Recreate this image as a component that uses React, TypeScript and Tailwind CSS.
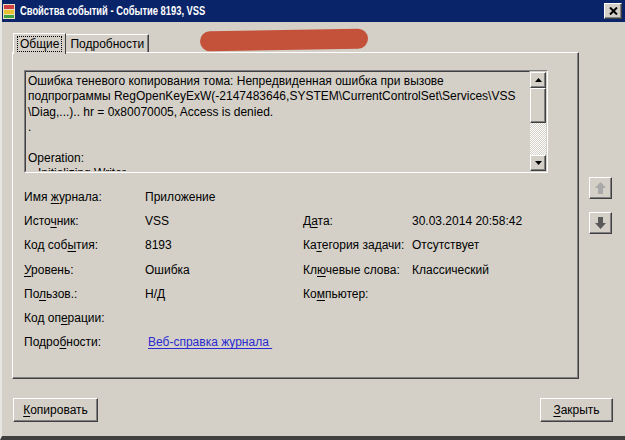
import React from "react";

const FONT = "font-['Liberation_Sans','Noto_Sans',sans-serif]";

const raised =
  "border border-t-white border-l-white border-r-[#404040] border-b-[#404040] shadow-[inset_-1px_-1px_0_#808080]";

function U({ children }: { children: React.ReactNode }) {
  return <span className="underline underline-offset-2">{children}</span>;
}

function ArrowBtn({ dir }: { dir: "up" | "down" }) {
  const up = dir === "up";
  return (
    <div className={`w-[23px] h-[22px] flex items-center justify-center bg-[#d4d0c8] ${raised}`}>
      <svg width="11" height="12" viewBox="0 0 11 12">
        {up ? (
          <polygon points="5.5,0 11,6 8,6 8,12 3,12 3,6 0,6" fill="#a9a9a9" />
        ) : (
          <polygon points="3,0 8,0 8,6 11,6 5.5,12 0,6 3,6" fill="#5a5a5a" />
        )}
      </svg>
    </div>
  );
}

function ScrollArrow({ up }: { up: boolean }) {
  return (
    <div className={`w-[16px] h-[16px] flex items-center justify-center bg-[#d4d0c8] ${raised}`}>
      <svg width="7" height="4" viewBox="0 0 7 4">
        {up ? <polygon points="3.5,0 7,4 0,4" fill="#000" /> : <polygon points="0,0 7,0 3.5,4" fill="#000" />}
      </svg>
    </div>
  );
}

const left = [
  { label: <>Имя <U>ж</U>урнала:</>, value: "Приложение" },
  { label: <>Исто<U>ч</U>ник:</>, value: "VSS" },
  { label: <>Код соб<U>ы</U>тия:</>, value: "8193" },
  { label: <><U>У</U>ровень:</>, value: "Ошибка" },
  { label: <>По<U>л</U>ьзов.:</>, value: "Н/Д" },
  { label: <>Код оп<U>е</U>рации:</>, value: "" },
];

const right = [
  null,
  { label: <>Д<U>а</U>та:</>, value: "30.03.2014 20:58:42" },
  { label: <>Ка<U>т</U>егория задачи:</>, value: "Отсутствует" },
  { label: <>Кл<U>ю</U>чевые слова:</>, value: "Классический" },
  { label: <>Ко<U>м</U>пьютер:</>, value: "" },
  null,
];

export default function App() {
  return (
    <div className={`relative w-[625px] h-[440px] bg-[#d4d0c8] overflow-hidden text-[12px] text-black ${FONT} border-l-2 border-l-[#e8e6e1] border-b-4 border-b-[#404040]`}>
      {/* Title bar */}
      <div className="h-[22px] bg-[#0a246a] flex items-center pl-[3px] pr-[3px] -ml-[2px]">
        <svg width="12" height="15" viewBox="0 0 12 15" className="shrink-0">
          <rect x="0" y="0" width="12" height="15" fill="#e8e0c0" />
          <rect x="1" y="1" width="10" height="4" fill="#d04040" />
          <rect x="1" y="6" width="10" height="4" fill="#e8c030" />
          <rect x="1" y="11" width="10" height="3" fill="#40a040" />
        </svg>
        <div className="ml-[5px] text-white font-bold text-[12px] whitespace-nowrap origin-left scale-x-[0.78]">
          Свойства событий - Событие 8193, VSS
        </div>
        <div className={`ml-auto w-[18px] h-[16px] bg-[#d4d0c8] flex items-center justify-center ${raised}`}>
          <svg width="9" height="8" viewBox="0 0 9 8">
            <path d="M1 0.5 L8 7.5 M8 0.5 L1 7.5" stroke="#000" strokeWidth="2" />
          </svg>
        </div>
      </div>

      {/* Redaction scribble */}
      <div className="absolute left-[198px] top-[30px] w-[168px] h-[20px] rounded-full bg-[#c4513a] -rotate-1" />

      <div className="flex pl-[10px] pt-[11px]">
        {/* Tab control */}
        <div className="w-[567px] flex flex-col">
          <div className="flex items-end h-[19px] relative z-10 pl-[1px]">
            <div className="h-[21px] -mb-[2px] px-[3px] flex items-center bg-[#d4d0c8] border-t border-l border-t-white border-l-white border-r border-r-[#404040]">
              <span className="px-[2px] border border-dotted border-black leading-[14px]">Общие</span>
            </div>
            <div className="h-[18px] px-[4px] flex items-center border-t border-t-white border-r border-r-[#404040] shadow-[inset_-1px_0_0_#808080]">
              Подробности
            </div>
          </div>
          <div className="h-[327px] border border-t-white border-l-white border-r-[#404040] border-b-[#404040] shadow-[inset_-1px_-1px_0_#808080] pl-[11px] pt-[17px] pr-[30px]">
            {/* Description box */}
            <div className="h-[103px] flex border border-t-[#808080] border-l-[#808080] border-r-white border-b-white">
              <div className="flex-1 overflow-hidden border border-t-[#404040] border-l-[#404040] border-r-[#d4d0c8] border-b-[#d4d0c8] pl-[2px] pt-[2px] leading-[15.4px] whitespace-nowrap">
                <div>Ошибка теневого копирования тома: Непредвиденная ошибка при вызове</div>
                <div>подпрограммы RegOpenKeyExW(-2147483646,SYSTEM\CurrentControlSet\Services\VSS</div>
                <div>\Diag,...).. hr = 0x80070005, Access is denied.</div>
                <div>.</div>
                <div>&nbsp;</div>
                <div>Operation:</div>
                <div>&nbsp;&nbsp;&nbsp;Initializing Writer</div>
              </div>
              <div className="w-[16px] flex flex-col my-[1px] mr-[1px]">
                <ScrollArrow up />
                <div className={`h-[35px] bg-[#d4d0c8] ${raised}`} />
                <div className="flex-1 bg-[repeating-conic-gradient(#ffffff_0_25%,#d4d0c8_0_50%)] bg-[length:2px_2px]" />
                <ScrollArrow up={false} />
              </div>
            </div>

            {/* Properties */}
            <div className="mt-[12px] grid grid-cols-[121px_158px_109px_1fr] auto-rows-[24.2px] items-center">
              {left.map((row, i) => (
                <React.Fragment key={i}>
                  <div>{row.label}</div>
                  <div>{row.value}</div>
                  <div>{right[i]?.label}</div>
                  <div>{right[i]?.value}</div>
                </React.Fragment>
              ))}
              <div>Подро<U>б</U>ности:</div>
              <div className="col-span-3 pl-[3px]">
                <span className="text-[#2a2ad0] underline underline-offset-2">Веб-справка журнала&nbsp;</span>
              </div>
            </div>
          </div>
        </div>

        {/* Next/previous */}
        <div className="ml-[10px] pt-[144px] flex flex-col gap-[13px]">
          <ArrowBtn dir="up" />
          <ArrowBtn dir="down" />
        </div>
      </div>

      {/* Bottom buttons */}
      <div className="flex justify-between pl-[11px] pr-[12px] mt-[19px]">
        <div className={`w-[85px] h-[24px] flex items-center justify-center bg-[#d4d0c8] ${raised}`}>
          <span><U>К</U>опировать</span>
        </div>
        <div className={`w-[73px] h-[24px] flex items-center justify-center bg-[#d4d0c8] ${raised}`}>
          <span><U>З</U>акрыть</span>
        </div>
      </div>
    </div>
  );
}
